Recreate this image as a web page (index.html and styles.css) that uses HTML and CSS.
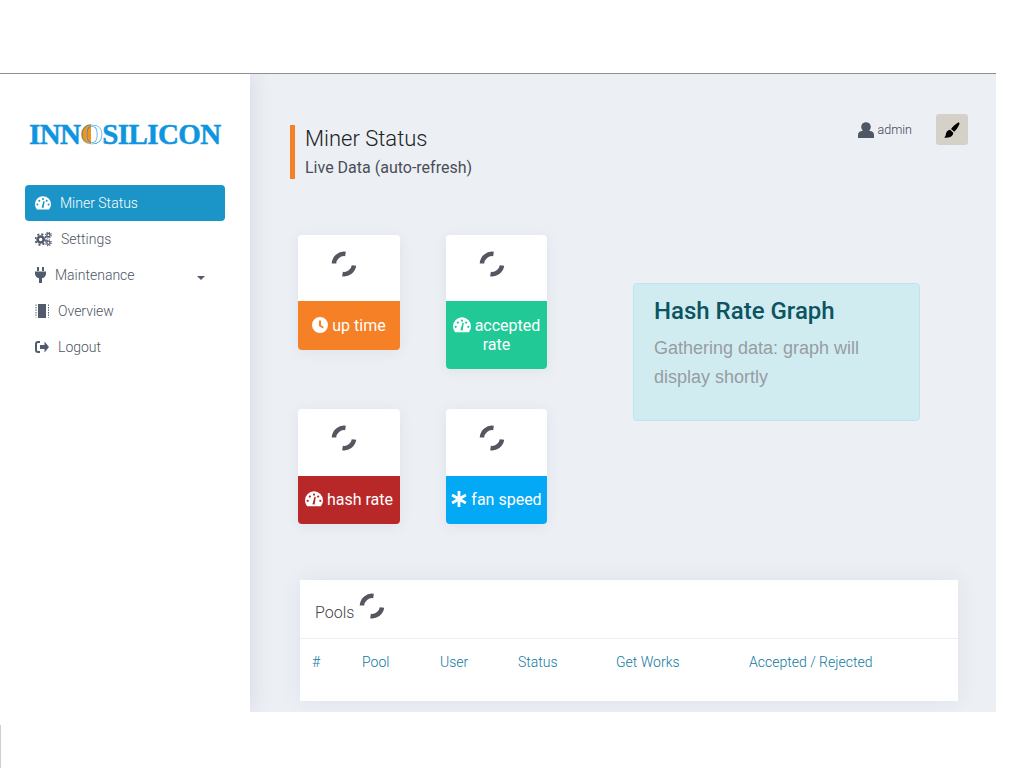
FILE: index.html
```html
<!DOCTYPE html>
<html>
  <head>
    <title>Miner Status</title>
    <link rel="stylesheet" href="styles.css">
  </head>
  <body>
    <svg class="icon-defs" aria-hidden="true">
      <symbol id="i-gauge" viewBox="0 0 16 14">
        <path fill="currentColor" fill-rule="evenodd" d="M2 13.5C.8 12 0 10.2 0 8.2a8 8 0 0 1 16 0c0 2-.8 3.8-2 5.3zM3.400 8.600a1 1 0 1 0-2 0 1 1 0 1 0 2 0zM5.300 4.800a1 1 0 1 0-2 0 1 1 0 1 0 2 0zM9 3a1 1 0 1 0-2 0 1 1 0 1 0 2 0zM12.700 4.800a1 1 0 1 0-2 0 1 1 0 1 0 2 0zM14.600 8.600a1 1 0 1 0-2 0 1 1 0 1 0 2 0zM6.600 11.600L8.400 5l1.200.3-1 6.600z"/>
      </symbol>
      <symbol id="i-cogs" viewBox="0 0 18 15">
        <g fill="none" stroke="currentColor">
          <circle cx="6" cy="8" r="3.200" stroke-width="2.800"/>
          <circle cx="6" cy="8" r="5.600" stroke-width="2" stroke-dasharray="2.200 2.200"/>
          <circle cx="14.200" cy="3.400" r="1.700" stroke-width="1.400"/>
          <circle cx="14.200" cy="3.400" r="3" stroke-width="1.300" stroke-dasharray="1.200 1.160"/>
          <circle cx="14.200" cy="11.500" r="1.700" stroke-width="1.400"/>
          <circle cx="14.200" cy="11.500" r="3" stroke-width="1.300" stroke-dasharray="1.200 1.160"/>
        </g>
      </symbol>
      <symbol id="i-plug" viewBox="0 0 11 16">
        <path fill="currentColor" d="M2 0h2v4H2zM7 0h2v4H7zM0 4.500h11V7a5 5 0 0 1-4 4.300V16H4v-4.700A5 5 0 0 1 0 7z"/>
      </symbol>
      <symbol id="i-chip" viewBox="0 0 14 14">
        <path fill="currentColor" d="M3 0h8v14H3z"/>
        <path fill="none" stroke="currentColor" stroke-dasharray="1.400 1.100" d="M1 .5v13M13.500 .5v13"/>
      </symbol>
      <symbol id="i-logout" viewBox="0 0 14 14">
        <path fill="currentColor" d="M5 1H3a3 3 0 0 0-3 3v6a3 3 0 0 0 3 3h2v-2H3a1 1 0 0 1-1-1V4a1 1 0 0 1 1-1h2zM5 5h4.500V1.500L14 7l-4.500 5.500V9H5z"/>
      </symbol>
      <symbol id="i-clock" viewBox="0 0 16 16">
        <path fill="currentColor" fill-rule="evenodd" d="M8 0a8 8 0 1 1 0 16A8 8 0 0 1 8 0zM7 3.500v5.600l3.800 2.300.9-1.400L9 8.300V3.500z"/>
      </symbol>
      <symbol id="i-star" viewBox="0 0 16 16">
        <path fill="none" stroke="currentColor" stroke-width="2.800" d="M8 0v16M1.100 4l13.800 8M14.900 4L1.100 12"/>
      </symbol>
      <symbol id="i-user" viewBox="0 0 16 16">
        <circle cx="8" cy="5" r="4.800" fill="currentColor"/>
        <path fill="currentColor" d="M4.500 8.800h7c2.800.4 4.500 1.800 4.500 4.200v3H0v-3c0-2.400 1.700-3.800 4.500-4.200z"/>
      </symbol>
      <symbol id="i-brush" viewBox="0 0 16 16">
        <path fill="currentColor" d="M14.500.3c1 .4 1.200 1.300.8 2.200-1.100 2.400-2.800 4.900-5 7.200L7 6.900C9 4.500 11.500 2 14.500.3zM6 7.800l3.300 2.900c-.2 2.400-1.800 4-4 4.600-1.500.4-3.300.5-5.100.2 1-.7 1.500-1.500 1.600-2.900.3-2.600 1.900-4.500 4.200-4.800z"/>
      </symbol>
      <symbol id="i-spin" viewBox="0 0 26 26">
        <path fill="none" stroke="currentColor" stroke-width="4.500" d="M3 12.500A10 10 0 0 1 14.500 3M23 14.500A10 10 0 0 1 11.500 23"/>
      </symbol>
    </svg>

    <div class="topbar"></div>

    <div class="shell">
      <aside class="sidebar">
        <div class="logo">INN<span class="logo-o">O</span>SILICON</div>
        <nav class="nav">
          <a class="nav-item active"><svg class="ic-16"><use href="#i-gauge"/></svg>Miner Status</a>
          <a class="nav-item"><svg class="ic-17"><use href="#i-cogs"/></svg>Settings</a>
          <a class="nav-item"><svg class="ic-11"><use href="#i-plug"/></svg>Maintenance<span class="caret"></span></a>
          <a class="nav-item"><svg class="ic-14"><use href="#i-chip"/></svg>Overview</a>
          <a class="nav-item"><svg class="ic-14"><use href="#i-logout"/></svg>Logout</a>
        </nav>
      </aside>

      <main class="main">
        <header class="page-head">
          <div class="page-title">
            <h1>Miner Status</h1>
            <p>Live Data (auto-refresh)</p>
          </div>
          <div class="user-area">
            <svg class="ic-user"><use href="#i-user"/></svg>
            <span class="user-name">admin</span>
            <button class="skin-button" title="Theme"><svg class="ic-brush"><use href="#i-brush"/></svg></button>
          </div>
        </header>

        <section class="overview">
          <div class="stats">
            <div class="stat">
              <div class="stat-top"><svg class="spinner"><use href="#i-spin"/></svg></div>
              <div class="stat-label orange"><svg class="ic-stat"><use href="#i-clock"/></svg> up time</div>
            </div>
            <div class="stat">
              <div class="stat-top"><svg class="spinner"><use href="#i-spin"/></svg></div>
              <div class="stat-label green"><svg class="ic-stat wide"><use href="#i-gauge"/></svg> accepted rate</div>
            </div>
            <div class="stat">
              <div class="stat-top"><svg class="spinner"><use href="#i-spin"/></svg></div>
              <div class="stat-label red"><svg class="ic-stat wide"><use href="#i-gauge"/></svg> hash rate</div>
            </div>
            <div class="stat">
              <div class="stat-top"><svg class="spinner"><use href="#i-spin"/></svg></div>
              <div class="stat-label blue"><svg class="ic-stat"><use href="#i-star"/></svg> fan speed</div>
            </div>
          </div>

          <div class="graph-alert">
            <h2>Hash Rate Graph</h2>
            <p>Gathering data: graph will display shortly</p>
          </div>
        </section>

        <section class="pools">
          <div class="pools-head"><span class="pools-name">Pools</span> <svg class="spinner"><use href="#i-spin"/></svg></div>
          <table class="pools-table">
            <thead>
              <tr>
                <th class="col-num">#</th>
                <th class="col-pool">Pool</th>
                <th class="col-user">User</th>
                <th class="col-status">Status</th>
                <th class="col-works">Get Works</th>
                <th>Accepted / Rejected</th>
              </tr>
            </thead>
          </table>
        </section>
      </main>
    </div>

    <div class="corner"></div>
  </body>
</html>
```

FILE: styles.css
```css
* {
  margin: 0;
  padding: 0;
  box-sizing: border-box;
}

body {
  font-family: Roboto, "Liberation Sans", sans-serif;
  font-size: 14px;
  background-color: #fff;
  color: #5a6270;
  width: 996px;
  overflow: hidden;
}

.icon-defs {
  display: none;
}

.topbar {
  height: 74px;
  border-bottom: 1px solid #8f8f8f;
}

.shell {
  display: flex;
  height: 638px;
  overflow: hidden;
}

.corner {
  height: 43px;
  margin-top: 13px;
  border-left: 1px solid #cfcfcb;
}

/* Sidebar */
.sidebar {
  position: relative;
  width: 250px;
  flex: none;
  padding: 0 25px;
  background-color: #fff;
  box-shadow: 0 0 22px rgba(40, 50, 80, 0.13);
}

.logo {
  position: relative;
  z-index: 0;
  margin-top: 45px;
  height: 30px;
  padding-left: 4px;
  font-family: "Liberation Serif", serif;
  font-size: 29px;
  font-weight: 700;
  line-height: 30px;
  letter-spacing: -0.6px;
  color: #0f95e0;
  -webkit-text-stroke: 0.5px #0f95e0;
  white-space: nowrap;
}

.logo-o {
  position: relative;
  color: transparent;
  -webkit-text-stroke: 0.6px #0f95e0;
}

/* orange half disc behind the O */
.logo-o::before {
  content: "";
  position: absolute;
  z-index: -1;
  top: 6px;
  left: 1px;
  width: 10px;
  height: 20px;
  border-radius: 10px 0 0 10px;
  background-color: #f0941f;
}

.nav {
  margin-top: 36px;
}

.nav-item {
  display: flex;
  align-items: center;
  gap: 9px;
  height: 36px;
  padding-left: 10px;
  border-radius: 4px;
  font-weight: 300;
  color: #4d5562;
}

.nav-item svg {
  height: 16px;
  flex: none;
  color: #525b6d;
}

.nav-item.active {
  background-color: #1b95c7;
  color: #fff;
}

.nav-item.active svg {
  color: #fff;
}

.ic-16 { width: 16px; }
.ic-17 { width: 17px; }
.ic-11 { width: 11px; }
.ic-14 { width: 14px; }

.caret {
  margin: 6px 20px 0 auto;
  border-top: 4px solid #525b6d;
  border-left: 4px solid transparent;
  border-right: 4px solid transparent;
}

/* Main */
.main {
  flex: 1;
  padding: 51px 28px 0 40px;
  background-color: #ecf0f5;
}

.page-head {
  display: flex;
  justify-content: space-between;
  align-items: flex-start;
}

.page-title {
  height: 54px;
  padding-left: 10px;
  border-left: 5px solid #f58025;
}

.page-title h1 {
  font-size: 22px;
  font-weight: 300;
  line-height: 28px;
  color: #222;
}

.page-title p {
  margin-top: 3px;
  font-size: 16px;
  line-height: 24px;
  color: #4a4d55;
}

.user-area {
  display: flex;
  align-items: center;
  margin-top: -11px;
}

.ic-user {
  width: 16px;
  height: 16px;
  color: #4f5664;
  margin-right: 4px;
}

.user-name {
  font-size: 12.5px;
  font-weight: 300;
  margin-right: 24px;
  color: #3d4350;
}

.skin-button {
  display: flex;
  align-items: center;
  justify-content: center;
  width: 32px;
  height: 31px;
  border: none;
  border-radius: 3px;
  background-color: #d5d1c9;
  color: #000;
}

.ic-brush {
  width: 16px;
  height: 16px;
}

.overview {
  display: flex;
  align-items: flex-start;
  margin-top: 56px;
  padding-left: 8px;
}

.stats {
  display: grid;
  grid-template-columns: 102px 101px;
  column-gap: 46px;
  row-gap: 40px;
  align-items: start;
}

.stat {
  border-radius: 4px;
  overflow: hidden;
  box-shadow: 0 2px 14px rgba(40, 50, 80, 0.07);
}

.stat-top {
  height: 66px;
  padding: 16px 10px 0 0;
  background-color: #fff;
  text-align: center;
}

.spinner {
  width: 26px;
  height: 26px;
  color: #55565f;
}

.stat-label {
  padding: 15px 0;
  font-size: 16px;
  font-weight: 400;
  line-height: 19px;
  color: #fff;
  text-align: center;
}

.stat:nth-child(n+3) .stat-top {
  height: 67px;
}

.stat:nth-child(n+3) .stat-label {
  padding: 14px 0 15px;
}

.ic-stat {
  width: 16px;
  height: 16px;
  vertical-align: -2px;
}

.ic-stat.wide {
  width: 18px;
}

.orange { background-color: #f58025; }
.green { background-color: #21c997; }
.red { background-color: #b92828; }
.blue { background-color: #03a9f4; }

.graph-alert {
  width: 287px;
  height: 138px;
  margin: 48px 0 0 86px;
  padding: 12px 20px;
  border: 1px solid #bee5eb;
  border-radius: 4px;
  background-color: #d1ecf1;
}

.graph-alert h2 {
  font-size: 24px;
  font-weight: 500;
  line-height: 30px;
  color: #0c5460;
}

.graph-alert p {
  margin-top: 8px;
  font-family: "Liberation Sans", sans-serif;
  font-size: 18px;
  line-height: 29px;
  color: #979ca1;
}

/* Pools */
.pools {
  width: 658px;
  height: 121px;
  margin: 56px 0 0 10px;
  background-color: #fff;
  box-shadow: 0 0 22px rgba(40, 50, 80, 0.07);
}

.pools-head {
  display: flex;
  align-items: center;
  gap: 5px;
  height: 59px;
  padding: 0 15px;
  border-bottom: 1px solid #eceff3;
  font-size: 16px;
  font-weight: 300;
  color: #3f4248;
}

.pools-name {
  margin-top: 6px;
}

.pools-head .spinner {
  margin-top: -6px;
}

.pools-table {
  width: 100%;
  border-collapse: collapse;
  table-layout: fixed;
}

.pools-table th {
  height: 46px;
  padding-left: 12px;
  font-size: 14px;
  font-weight: 300;
  text-align: left;
  color: #10799f;
}

.col-num { width: 50px; }
.col-pool { width: 78px; }
.col-user { width: 78px; }
.col-status { width: 98px; }
.col-works { width: 133px; }
```
